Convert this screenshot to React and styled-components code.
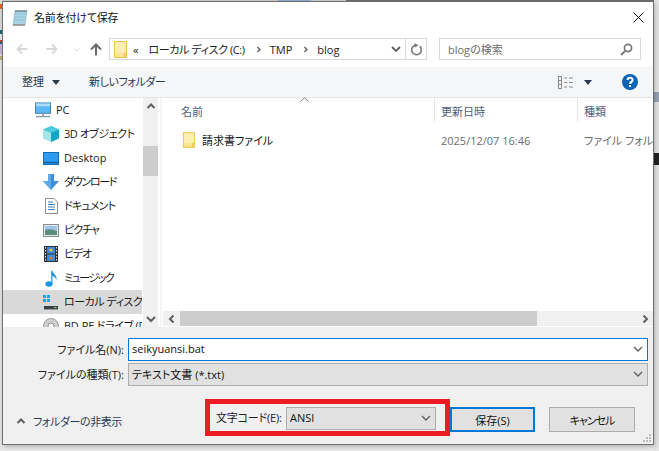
import React from 'react'
import styled, { createGlobalStyle } from 'styled-components'

const GlobalStyle = createGlobalStyle`
  html, body { margin: 0; padding: 0; }
  * { box-sizing: border-box; }
  body {
    font-family: "Open Sans", "Noto Sans CJK JP", sans-serif;
    font-size: 11px;
    font-feature-settings: "palt";
    color: #1a1a1a;
  }
`

const Page = styled.div`
  width: 659px;
  height: 451px;
  overflow: hidden;
  padding: 1px 5px 6px 2px;
  background:
    linear-gradient(to bottom, #ddd 0 4px, #e46a2c 4px 9px, #ddd 9px 30px, #1f6a7c 30px 34px, #e8e8e8 34px 40px, #d23a2a 40px 42px, #1f6a7c 42px 44px, #c9b3d9 44px 54px, #ddd 54px 56px, #c9b27a 56px 60px, #e8e8e8 60px) left top / 2px 100% no-repeat,
    linear-gradient(to bottom, #e6e6e6 0 92px, #9aa4b4 92px 102px, #e6e6e6 102px 153px, #222 153px 165px, #e6e6e6 165px) right top / 5px 100% no-repeat,
    linear-gradient(to right, #cfcfcf 0 278px, #8fb2d6 278px 311px, #cfcfcf 311px 346px, #6e6e6e 346px) left top / 100% 1px no-repeat,
    #ededed;
`

const Dialog = styled.div`
  position: relative;
  width: 652px;
  height: 444px;
  display: flex;
  flex-direction: column;
  background: #fff;
  border: 1px solid #6f6f6f;
  box-shadow: 1px 2px 5px rgba(0, 0, 0, 0.25);
`

const TitleBar = styled.div`
  height: 30px;
  flex: none;
  display: flex;
  align-items: center;
  gap: 6px;
  padding: 0 9px;
`

const TitleText = styled.span`
  flex: 1;
  color: #111;
  letter-spacing: -0.2px;
`

const NavBar = styled.div`
  height: 35px;
  flex: none;
  display: flex;
  align-items: flex-start;
  padding: 6px 0 0 13px;
`

const NavButton = styled.div`
  width: ${({ $w }) => $w}px;
  height: 22px;
  display: flex;
  align-items: center;
`

const AddressBar = styled.div`
  width: 318px;
  height: 22px;
  display: flex;
  align-items: center;
  border: 1px solid #d9d9d9;
  padding-left: 4px;
`

const Crumb = styled.span`
  display: flex;
  margin-left: ${({ $ml }) => $ml}px;
  letter-spacing: ${({ $ls }) => $ls || 0}px;
  white-space: nowrap;
  color: #222;
`

const AddressEnd = styled.div`
  margin-left: auto;
  display: flex;
  align-items: center;
  height: 100%;
`

const RefreshCell = styled.div`
  width: 21px;
  height: 100%;
  margin-left: 4px;
  border-left: 1px solid #d9d9d9;
  display: flex;
  align-items: center;
  justify-content: center;
`

const SearchBox = styled.div`
  width: 202px;
  height: 22px;
  margin-left: 12px;
  display: flex;
  align-items: center;
  justify-content: space-between;
  border: 1px solid #d9d9d9;
  padding: 0 7px 0 8px;
  color: #6d6d6d;
`

const Toolbar = styled.div`
  height: 31px;
  flex: none;
  display: flex;
  align-items: center;
  padding: 0 15px 0 19px;
  background: #f5f6f7;
  border-bottom: 1px solid #e6e6e6;
  color: #2a3a52;
`

const ToolLabel = styled.span`
  margin: -2px ${({ $mr }) => $mr || 0}px 0 ${({ $ml }) => $ml || 0}px;
  letter-spacing: ${({ $ls }) => $ls || 0}px;
  white-space: nowrap;
`

const ToolEnd = styled.div`
  margin-left: auto;
  display: flex;
  align-items: center;
`

const CaretGap = styled.span`
  display: flex;
  margin: 0 30px 0 10px;
`

const Body = styled.div`
  height: 229px;
  flex: none;
  display: flex;
  background: #fff;
`

const Sidebar = styled.div`
  width: 140px;
  flex: none;
  overflow: hidden;
`

const NavRow = styled.div`
  height: 24px;
  width: 139px;
  display: flex;
  align-items: center;
  gap: 5px;
  padding-left: ${({ $root }) => ($root ? 32 : 40)}px;
  white-space: nowrap;
  overflow: hidden;
  background: ${({ $selected }) => ($selected ? '#d9d9d9' : 'transparent')};
  color: #1a1a1a;
`

const NavLabel = styled.span`
  margin-top: -2px;
  letter-spacing: ${({ $ls }) => $ls || 0}px;
`

const IconSlot = styled.span`
  width: 16px;
  height: 16px;
  flex: none;
  display: flex;
  align-items: center;
  justify-content: center;
`

const VScroll = styled.div`
  width: 15px;
  flex: none;
  display: flex;
  flex-direction: column;
  align-items: stretch;
  background: #f0f0f0;
`

const ScrollArrow = styled.div`
  flex: none;
  display: flex;
  align-items: center;
  justify-content: center;
  height: ${({ $h }) => ($h ? `${$h}px` : 'auto')};
  width: ${({ $w }) => ($w ? `${$w}px` : 'auto')};
  margin-top: ${({ $end, $h }) => ($end && $h ? 'auto' : '0')};
  margin-left: ${({ $end, $w }) => ($end && $w ? 'auto' : '0')};
`

const VThumb = styled.div`
  height: 30px;
  margin-top: 33px;
  flex: none;
  background: #cdcdcd;
`

const Gutter = styled.div`
  width: 4px;
  flex: none;
  background: linear-gradient(to right, #fff 0 2px, #f6f6f6 2px);
`

const Main = styled.div`
  flex: 1;
  min-width: 0;
  display: flex;
  flex-direction: column;
`

const HeaderRow = styled.div`
  position: relative;
  height: 24px;
  flex: none;
  display: flex;
  color: #4c607a;
`

const HeaderCell = styled.div`
  width: ${({ $w }) => $w}px;
  flex: none;
  padding: 5px 0 0 ${({ $pl }) => $pl}px;
  border-right: ${({ $last }) => ($last ? 'none' : '1px solid #e5e5e5')};
`

const SortCaret = styled.svg`
  position: absolute;
  left: 138px;
  top: -1px;
`

const FileArea = styled.div`
  flex: 1;
  min-height: 0;
`

const FileRow = styled.div`
  height: 22px;
  margin-top: 7px;
  display: flex;
  align-items: center;
  white-space: nowrap;
  overflow: hidden;
`

const FileName = styled.div`
  width: 272px;
  flex: none;
  padding-left: 21px;
  display: flex;
  align-items: center;
  gap: 7px;
  color: #111;
`

const FileMeta = styled.div`
  width: ${({ $w }) => $w}px;
  flex: none;
  padding-left: ${({ $pl }) => $pl}px;
  color: #6d6d6d;
`

const HScroll = styled.div`
  height: 15px;
  margin-bottom: 1px;
  margin-left: 1px;
  flex: none;
  display: flex;
  background: #f0f0f0;
`

const HThumb = styled.div`
  width: 357px;
  flex: none;
  background: #cdcdcd;
`

const Footer = styled.div`
  flex: 1;
  display: flex;
  flex-direction: column;
  padding-top: 11px;
  background: #f0f0f0;
`

const FormRow = styled.div`
  display: flex;
  align-items: center;
  margin-bottom: 2px;
`

const FormLabel = styled.label`
  width: 121px;
  margin: -2px 4px 0 0;
  text-align: right;
  color: #222;
  white-space: nowrap;
`

const Field = styled.div`
  height: 23px;
  width: ${({ $w }) => $w}px;
  display: flex;
  align-items: center;
  justify-content: space-between;
  padding: 0 4px 2px 3px;
  color: #111;
  background: ${({ $active }) => ($active ? '#fff' : '#e1e1e1')};
  border: 1px solid ${({ $active }) => ($active ? '#0078d7' : '#adadad')};
`

const ActionRow = styled.div`
  display: flex;
  align-items: flex-start;
  height: 37px;
  margin-top: 11px;
`

const HideToggle = styled.div`
  width: 202px;
  padding: 14px 0 0 13px;
  display: flex;
  align-items: center;
  gap: 7px;
  color: #2a3a52;
  letter-spacing: -0.4px;
  white-space: nowrap;
`

const EncodingBox = styled.div`
  width: 245px;
  height: 37px;
  flex: none;
  display: flex;
  align-items: flex-start;
  padding: 3px 9px 0 6px;
  border: 5px solid #ed1c24;
`

const EncodingLabel = styled.label`
  width: 70px;
  height: 23px;
  line-height: 22px;
  letter-spacing: -0.2px;
  white-space: nowrap;
  color: #222;
`

const Button = styled.button`
  height: 25px;
  width: ${({ $w }) => $w}px;
  margin: 8px ${({ $mr }) => $mr || 0}px 0 0;
  padding: 0;
  flex: none;
  font: inherit;
  font-feature-settings: inherit;
  letter-spacing: ${({ $ls }) => $ls || 0}px;
  color: #111;
  background: #e1e1e1;
  border: ${({ $primary }) => ($primary ? '2px solid #0078d7' : '1px solid #adadad')};
`

const Grip = styled.svg`
  position: absolute;
  right: 2px;
  bottom: 2px;
`

const Chevron = ({ dir = 'down', color = '#606060', size = 10, w = 1.4 }) => {
  const d = {
    down: 'M1 3 L5 7 L9 3',
    up: 'M1.5 7 L5 3.5 L8.5 7',
    left: 'M6.5 1.5 L3 5 L6.5 8.5',
    right: 'M3.5 1.5 L7 5 L3.5 8.5',
  }[dir]
  return (
    <svg width={size} height={size} viewBox="0 0 10 10" fill="none">
      <path d={d} stroke={color} strokeWidth={w} />
    </svg>
  )
}

const Caret = ({ color = '#2a3a52' }) => (
  <svg width="8" height="5" viewBox="0 0 8 5"><path d="M0 0 H8 L4 5 Z" fill={color} /></svg>
)

const NotepadIcon = () => (
  <svg width="16" height="17" viewBox="0 0 16 17">
    <path d="M3 2 H15 L13 16 H1 Z" fill="#a9d6e6" stroke="#7fa9b8" strokeWidth="0.6" />
    <path d="M3 5 H14 M3 8 H13.5 M2.6 11 H13" stroke="#7fb4c8" strokeWidth="0.7" />
    <path d="M1 16 H13" stroke="#8a8272" strokeWidth="1.2" />
    <path d="M4 1 V3 M6 1 V3 M8 1 V3 M10 1 V3 M12 1 V3 M14 1 V3" stroke="#444" strokeWidth="0.8" />
  </svg>
)

const FolderIcon = ({ w = 13, h = 17 }) => (
  <svg width={w} height={h} viewBox="0 0 13 17">
    <path d="M0.5 0.5 H12.5 V16.5 H0.5 Z" fill="#fde58f" stroke="#e8c04e" />
    <path d="M1 1 H12 V12 H1 Z" fill="#fdeeb0" />
    <path d="M10 12 H12.5 V16.5 H10 Z" fill="#f4d46a" stroke="#e8c04e" strokeWidth="0.6" />
  </svg>
)

const PcIcon = () => (
  <svg width="17" height="16" viewBox="0 0 17 16">
    <rect x="0.5" y="0.5" width="16" height="11" fill="#5cb8f2" stroke="#3f7fa8" />
    <rect x="1" y="1" width="15" height="3" fill="#a8dcf8" />
    <path d="M8.5 12 V14" stroke="#8a9aa6" strokeWidth="2" />
    <path d="M1 15 H16" stroke="#8a9aa6" strokeWidth="1.4" />
  </svg>
)

const CubeIcon = () => (
  <svg width="16" height="16" viewBox="0 0 16 16">
    <path d="M8 0 L16 3.5 V12.5 L8 16 Z" fill="#12a5c8" />
    <path d="M8 0 L0 3.5 V12.5 L8 16 Z" fill="#a6e6ea" />
    <path d="M0 3.5 L8 7 L16 3.5 L8 0 Z" fill="#4fc9dc" />
  </svg>
)

const DesktopIcon = () => (
  <svg width="16" height="13" viewBox="0 0 16 13">
    <rect x="0.5" y="0.5" width="15" height="12" fill="#2d9cf0" stroke="#0e6cb8" />
    <path d="M1 10.5 H15" stroke="#0e5a9c" strokeWidth="1.4" />
  </svg>
)

const DownloadIcon = () => (
  <svg width="16" height="16" viewBox="0 0 16 16">
    <path d="M5 0 H11 V7 H16 L8 16 L0 7 H5 Z" fill="#3d8fdc" />
    <path d="M5 0 H8 V16 L0 7 H5 Z" fill="#62a8e8" />
  </svg>
)

const DocIcon = () => (
  <svg width="13" height="16" viewBox="0 0 13 16">
    <path d="M0.5 0.5 H9 L12.5 4 V15.5 H0.5 Z" fill="#fff" stroke="#8d8d8d" />
    <path d="M3 4 H8 M3 6.5 H10 M3 9 H10 M3 11.5 H10" stroke="#3d7fc0" strokeWidth="1" />
  </svg>
)

const PictureIcon = () => (
  <svg width="16" height="13" viewBox="0 0 16 13">
    <rect x="0.5" y="0.5" width="15" height="12" fill="#dfeaf2" stroke="#8c8c8c" />
    <rect x="2" y="2" width="12" height="4" fill="#9cc6e4" />
    <path d="M2 6 Q8 4 14 7 V11 H2 Z" fill="#5d8d7c" />
  </svg>
)

const VideoIcon = () => (
  <svg width="14" height="16" viewBox="0 0 14 16">
    <rect width="14" height="16" fill="#333" />
    <rect x="3" y="1" width="8" height="6.5" fill="#3c8ad8" />
    <rect x="3" y="8.5" width="8" height="6.5" fill="#3c8ad8" />
    <circle cx="7" cy="4" r="1.6" fill="#e8c33a" />
    <circle cx="7" cy="12" r="1.6" fill="#d87a2c" />
    <path d="M1.5 1 V15 M12.5 1 V15" stroke="#ddd" strokeWidth="1" strokeDasharray="1.5 1.5" />
  </svg>
)

const MusicIcon = () => (
  <svg width="13" height="17" viewBox="0 0 13 17">
    <ellipse cx="4" cy="14" rx="3.6" ry="2.7" fill="#1c96e8" />
    <path d="M6.2 14 V0.5 H7.4 C7.8 4 12.5 5 11.5 10 C10.8 7.5 9 6.5 7.4 6 V14 Z" fill="#1c96e8" />
  </svg>
)

const DriveIcon = () => (
  <svg width="16" height="16" viewBox="0 0 16 16">
    <path d="M0 1 H3 V4 H0 Z M4 1 H7 V4 H4 Z M0 5 H3 V8 H0 Z M4 5 H7 V8 H4 Z" fill="#1aa3e8" />
    <path d="M2 9 H14 L16 11 V16 H0 V11 Z" fill="#d5d8da" />
    <rect x="1" y="12" width="14" height="3.4" fill="#3a3f44" />
    <rect x="11" y="13" width="2.5" height="1.2" fill="#6fd44a" />
  </svg>
)

const DiscIcon = () => (
  <svg width="16" height="16" viewBox="0 0 16 16">
    <circle cx="8" cy="8" r="7.5" fill="#cfcfcf" stroke="#9a9a9a" />
    <circle cx="8" cy="8" r="3" fill="#fff" stroke="#8a8a8a" />
  </svg>
)

const ArrowLeft = ({ color = '#d6d6d6' }) => (
  <svg width="12" height="12" viewBox="0 0 12 12" fill="none">
    <path d="M11.5 6 H1.5 M6 1.5 L1.5 6 L6 10.5" stroke={color} strokeWidth="1.8" />
  </svg>
)

const ArrowRight = ({ color = '#d6d6d6' }) => (
  <svg width="12" height="12" viewBox="0 0 12 12" fill="none">
    <path d="M0.5 6 H10.5 M6 1.5 L10.5 6 L6 10.5" stroke={color} strokeWidth="1.8" />
  </svg>
)

const ArrowUp = () => (
  <svg width="12" height="13" viewBox="0 0 12 13" fill="none">
    <path d="M6 12.5 V1.5 M1 6.5 L6 1.5 L11 6.5" stroke="#6a6a6a" strokeWidth="2" />
  </svg>
)

const RefreshIcon = () => (
  <svg width="12" height="13" viewBox="0 0 12 13" fill="none">
    <path d="M9.8 3.4 A4.8 4.8 0 1 1 5.5 2.2" stroke="#7a7a7a" strokeWidth="1.6" />
    <path d="M4.5 0 L8.5 2.4 L4.5 4.4 Z" fill="#7a7a7a" />
  </svg>
)

const SearchIcon = () => (
  <svg width="13" height="13" viewBox="0 0 13 13" fill="none">
    <circle cx="8" cy="5" r="3.6" stroke="#7a7a7a" strokeWidth="1.7" />
    <path d="M5.4 7.6 L1 12" stroke="#7a7a7a" strokeWidth="2" />
  </svg>
)

const ViewIcon = () => (
  <svg width="16" height="13" viewBox="0 0 16 13" fill="none">
    <rect x="0.5" y="0.5" width="3" height="12" stroke="#8a8a8a" />
    <path d="M1 4.5 H3 M1 8.5 H3" stroke="#8a8a8a" />
    <path d="M6 2 H9 M11 2 H15 M6 6.5 H9 M11 6.5 H15 M6 11 H9 M11 11 H15" stroke="#8a8a8a" />
  </svg>
)

const HelpIcon = () => (
  <svg width="16" height="16" viewBox="0 0 16 16">
    <circle cx="8" cy="8" r="8" fill="#0e62b8" />
    <path d="M5.6 6 C5.6 3 10.6 3 10.6 6 C10.6 8 8 7.8 8 10" fill="none" stroke="#fff" strokeWidth="2" />
    <rect x="7" y="11" width="2" height="2" fill="#fff" />
  </svg>
)

const CloseIcon = () => (
  <svg width="11" height="11" viewBox="0 0 11 11" fill="none">
    <path d="M0.5 0.5 L10.5 10.5 M10.5 0.5 L0.5 10.5" stroke="#111" strokeWidth="1" />
  </svg>
)

const navItems = [
  { label: 'PC', icon: <PcIcon />, root: true },
  { label: '3D オブジェクト', icon: <CubeIcon />, ls: -0.5 },
  { label: 'Desktop', icon: <DesktopIcon /> },
  { label: 'ダウンロード', icon: <DownloadIcon />, ls: -1.3 },
  { label: 'ドキュメント', icon: <DocIcon />, ls: -0.8 },
  { label: 'ピクチャ', icon: <PictureIcon />, ls: -1 },
  { label: 'ビデオ', icon: <VideoIcon />, ls: -1.2 },
  { label: 'ミュージック', icon: <MusicIcon />, ls: -1.5 },
  { label: 'ローカル ディスク (C:)', icon: <DriveIcon />, selected: true, ls: -0.5 },
  { label: 'BD-RE ドライブ (D:)', icon: <DiscIcon />, ls: -0.3 },
]

const App = () => {
  return (
    <Page>
      <GlobalStyle />
      <Dialog>
        <TitleBar>
          <NotepadIcon />
          <TitleText>名前を付けて保存</TitleText>
          <CloseIcon />
        </TitleBar>

        <NavBar>
          <NavButton $w={30}><ArrowLeft /></NavButton>
          <NavButton $w={27}><ArrowRight /></NavButton>
          <NavButton $w={17}><Chevron color="#d6d6d6" size={7} /></NavButton>
          <NavButton $w={19}><ArrowUp /></NavButton>
          <AddressBar>
            <FolderIcon />
            <Crumb $ml={6}>«</Crumb>
            <Crumb $ml={10} $ls={-0.4}>ローカル ディスク (C:)</Crumb>
            <Crumb $ml={10}><Chevron dir="right" size={7} w={2} /></Crumb>
            <Crumb $ml={8}>TMP</Crumb>
            <Crumb $ml={10}><Chevron dir="right" size={7} w={2} /></Crumb>
            <Crumb $ml={8}>blog</Crumb>
            <AddressEnd>
              <Chevron dir="down" w={1.8} />
              <RefreshCell><RefreshIcon /></RefreshCell>
            </AddressEnd>
          </AddressBar>
          <SearchBox>
            blogの検索
            <SearchIcon />
          </SearchBox>
        </NavBar>

        <Toolbar>
          <ToolLabel $mr={8}>整理</ToolLabel>
          <Caret />
          <ToolLabel $ml={29} $ls={-0.4}>新しいフォルダー</ToolLabel>
          <ToolEnd>
            <ViewIcon />
            <CaretGap><Caret /></CaretGap>
            <HelpIcon />
          </ToolEnd>
        </Toolbar>

        <Body>
          <Sidebar>
            {navItems.map((item) => (
              <NavRow key={item.label} $root={item.root} $selected={item.selected}>
                <IconSlot>{item.icon}</IconSlot>
                <NavLabel $ls={item.ls}>{item.label}</NavLabel>
              </NavRow>
            ))}
          </Sidebar>
          <VScroll>
            <ScrollArrow $h={15}><Chevron dir="up" w={2} /></ScrollArrow>
            <VThumb />
            <ScrollArrow $h={17} $end><Chevron dir="down" w={2} /></ScrollArrow>
          </VScroll>
          <Gutter />
          <Main>
            <HeaderRow>
              <HeaderCell $w={273} $pl={19}>名前</HeaderCell>
              <HeaderCell $w={143} $pl={6}>更新日時</HeaderCell>
              <HeaderCell $w={75} $pl={6} $last>種類</HeaderCell>
              <SortCaret width="9" height="5" viewBox="0 0 9 5" fill="none">
                <path d="M0.5 4.5 L4.5 0.8 L8.5 4.5" stroke="#7a7a7a" />
              </SortCaret>
            </HeaderRow>
            <FileArea>
              <FileRow>
                <FileName>
                  <FolderIcon w={12} h={16} />
                  請求書ファイル
                </FileName>
                <FileMeta $w={144} $pl={7}>2025/12/07 16:46</FileMeta>
                <FileMeta $w={75} $pl={6}>ファイル フォルダー</FileMeta>
              </FileRow>
            </FileArea>
            <HScroll>
              <ScrollArrow $w={17}><Chevron dir="left" w={2} /></ScrollArrow>
              <HThumb />
              <ScrollArrow $w={17} $end><Chevron dir="right" w={2} /></ScrollArrow>
            </HScroll>
          </Main>
        </Body>

        <Footer>
          <FormRow>
            <FormLabel>ファイル名(N):</FormLabel>
            <Field $w={520} $active>
              seikyuansi.bat
              <Chevron />
            </Field>
          </FormRow>
          <FormRow>
            <FormLabel>ファイルの種類(T):</FormLabel>
            <Field $w={520}>
              テキスト文書 (*.txt)
              <Chevron />
            </Field>
          </FormRow>
          <ActionRow>
            <HideToggle>
              <Chevron dir="up" w={2} />
              フォルダーの非表示
            </HideToggle>
            <EncodingBox>
              <EncodingLabel>文字コード(E):</EncodingLabel>
              <Field $w={150}>
                ANSI
                <Chevron />
              </Field>
            </EncodingBox>
            <Button $primary $w={85} $mr={14}>保存(S)</Button>
            <Button $w={86} $ls={-1}>キャンセル</Button>
          </ActionRow>
          <Grip width="8" height="8" viewBox="0 0 8 8" fill="#bdbdbd">
            <rect x="6" y="0" width="2" height="2" />
            <rect x="3" y="3" width="2" height="2" />
            <rect x="6" y="3" width="2" height="2" />
            <rect x="0" y="6" width="2" height="2" />
            <rect x="3" y="6" width="2" height="2" />
            <rect x="6" y="6" width="2" height="2" />
          </Grip>
        </Footer>
      </Dialog>
    </Page>
  )
}

export default App
